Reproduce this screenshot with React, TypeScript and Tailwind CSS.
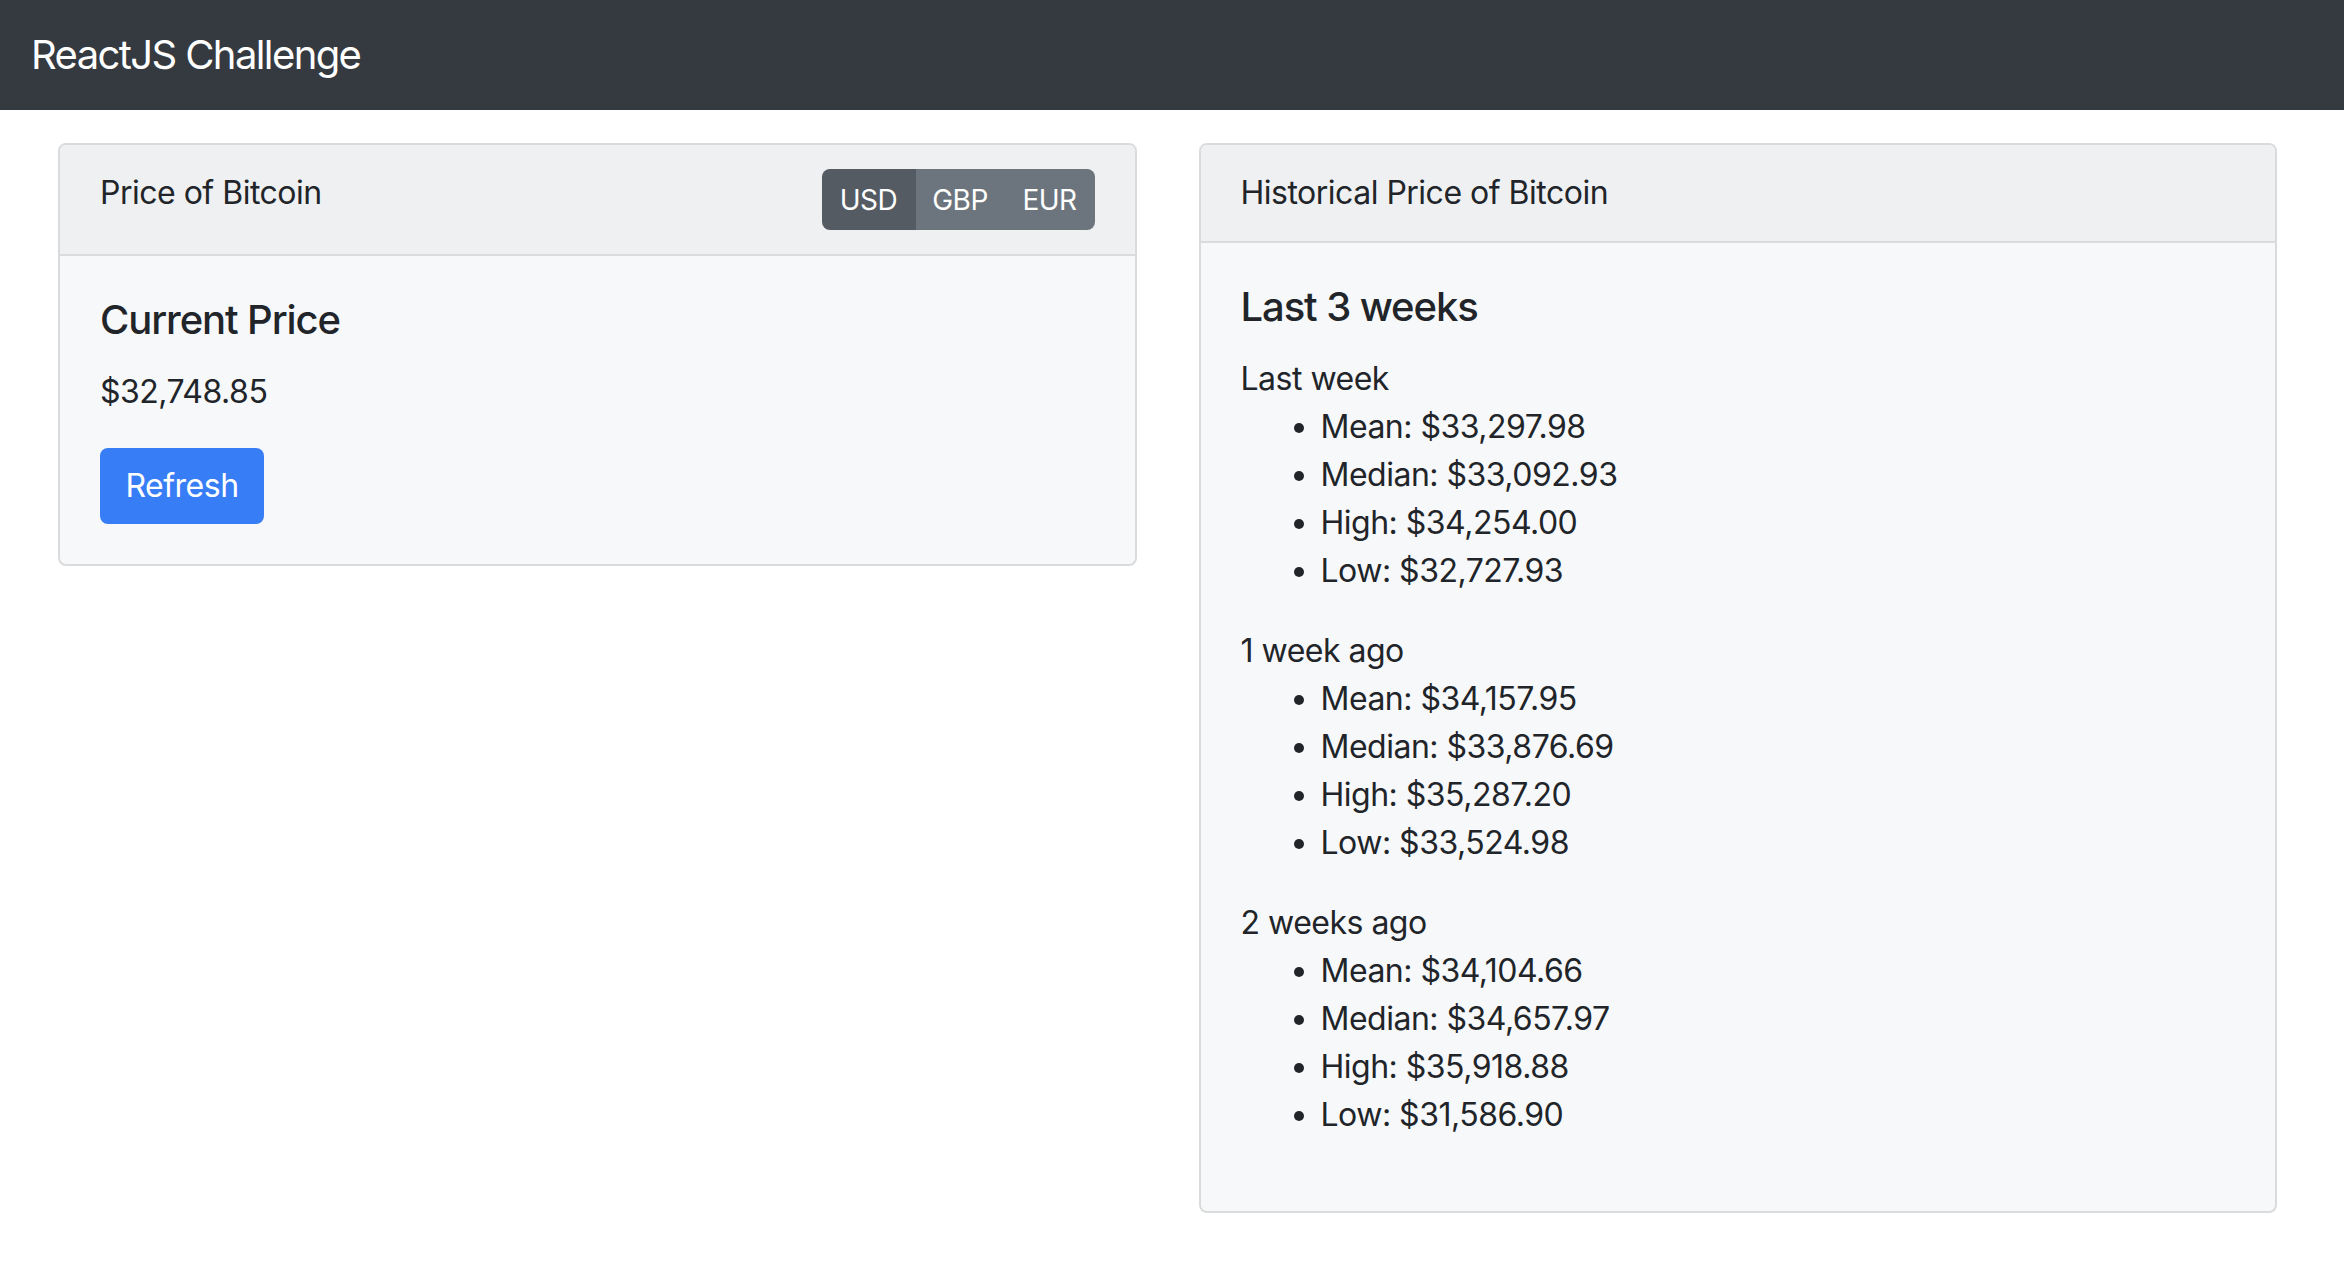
import { useState } from 'react';

const currencies = ['USD', 'GBP', 'EUR'];
const widths: Record<string, string> = { USD: 'w-[94px]', GBP: 'w-[89px]', EUR: 'w-[90px]' };

const weeks = [
  { label: 'Last week', mean: '$33,297.98', median: '$33,092.93', high: '$34,254.00', low: '$32,727.93' },
  { label: '1 week ago', mean: '$34,157.95', median: '$33,876.69', high: '$35,287.20', low: '$33,524.98' },
  { label: '2 weeks ago', mean: '$34,104.66', median: '$34,657.97', high: '$35,918.88', low: '$31,586.90' },
];

export default function App() {
  const [currency, setCurrency] = useState('USD');

  return (
    <div className="min-h-screen bg-white font-['Inter',sans-serif] text-[#212529] text-[32px] leading-[48px] tracking-[-0.5px]">
      <nav className="h-[110px] bg-[#343a40] flex items-center px-[31px]">
        <span className="text-[40px] leading-[60px] tracking-[-1.6px] text-white">ReactJS Challenge</span>
      </nav>

      <div className="grid grid-cols-2 gap-[62px] pl-[58px] pr-[67px] pt-[33px] items-start">
        {/* Current price card */}
        <div className="border-2 border-[#dadbdc] rounded-[8px] bg-[#f7f8fa] overflow-hidden">
          <div className="flex items-start justify-between px-[40px] py-[24px] bg-[#eff0f2] border-b-2 border-[#dadbdc]">
            <span>Price of Bitcoin</span>
            <div className="flex h-[61px] rounded-[8px] overflow-hidden">
              {currencies.map((c) => (
                <button
                  key={c}
                  onClick={() => setCurrency(c)}
                  className={`${widths[c]} text-[28px] text-white ${c === currency ? 'bg-[#545b62]' : 'bg-[#6c757d]'}`}
                >
                  {c}
                </button>
              ))}
            </div>
          </div>
          <div className="p-[40px]">
            <h5 className="text-[40px] leading-[48px] tracking-[-1.1px] font-medium mb-[24px]">Current Price</h5>
            <p className="mb-[32px]">$32,748.85</p>
            <button className="w-[164px] h-[76px] rounded-[8px] bg-[#377df6] text-white">Refresh</button>
          </div>
        </div>

        {/* Historical card */}
        <div className="border-2 border-[#dadbdc] rounded-[8px] bg-[#f7f8fa] overflow-hidden">
          <div className="px-[40px] py-[24px] bg-[#eff0f2] border-b-2 border-[#dadbdc]">
            Historical Price of Bitcoin
          </div>
          <div className="p-[40px]">
            <h5 className="text-[40px] leading-[48px] tracking-[-1.1px] font-medium mb-[24px]">Last 3 weeks</h5>
            {weeks.map((w) => (
              <div key={w.label}>
                <div>{w.label}</div>
                <ul className="list-disc pl-[80px] mb-[32px]">
                  <li>Mean: {w.mean}</li>
                  <li>Median: {w.median}</li>
                  <li>High: {w.high}</li>
                  <li>Low: {w.low}</li>
                </ul>
              </div>
            ))}
          </div>
        </div>
      </div>
    </div>
  );
}
